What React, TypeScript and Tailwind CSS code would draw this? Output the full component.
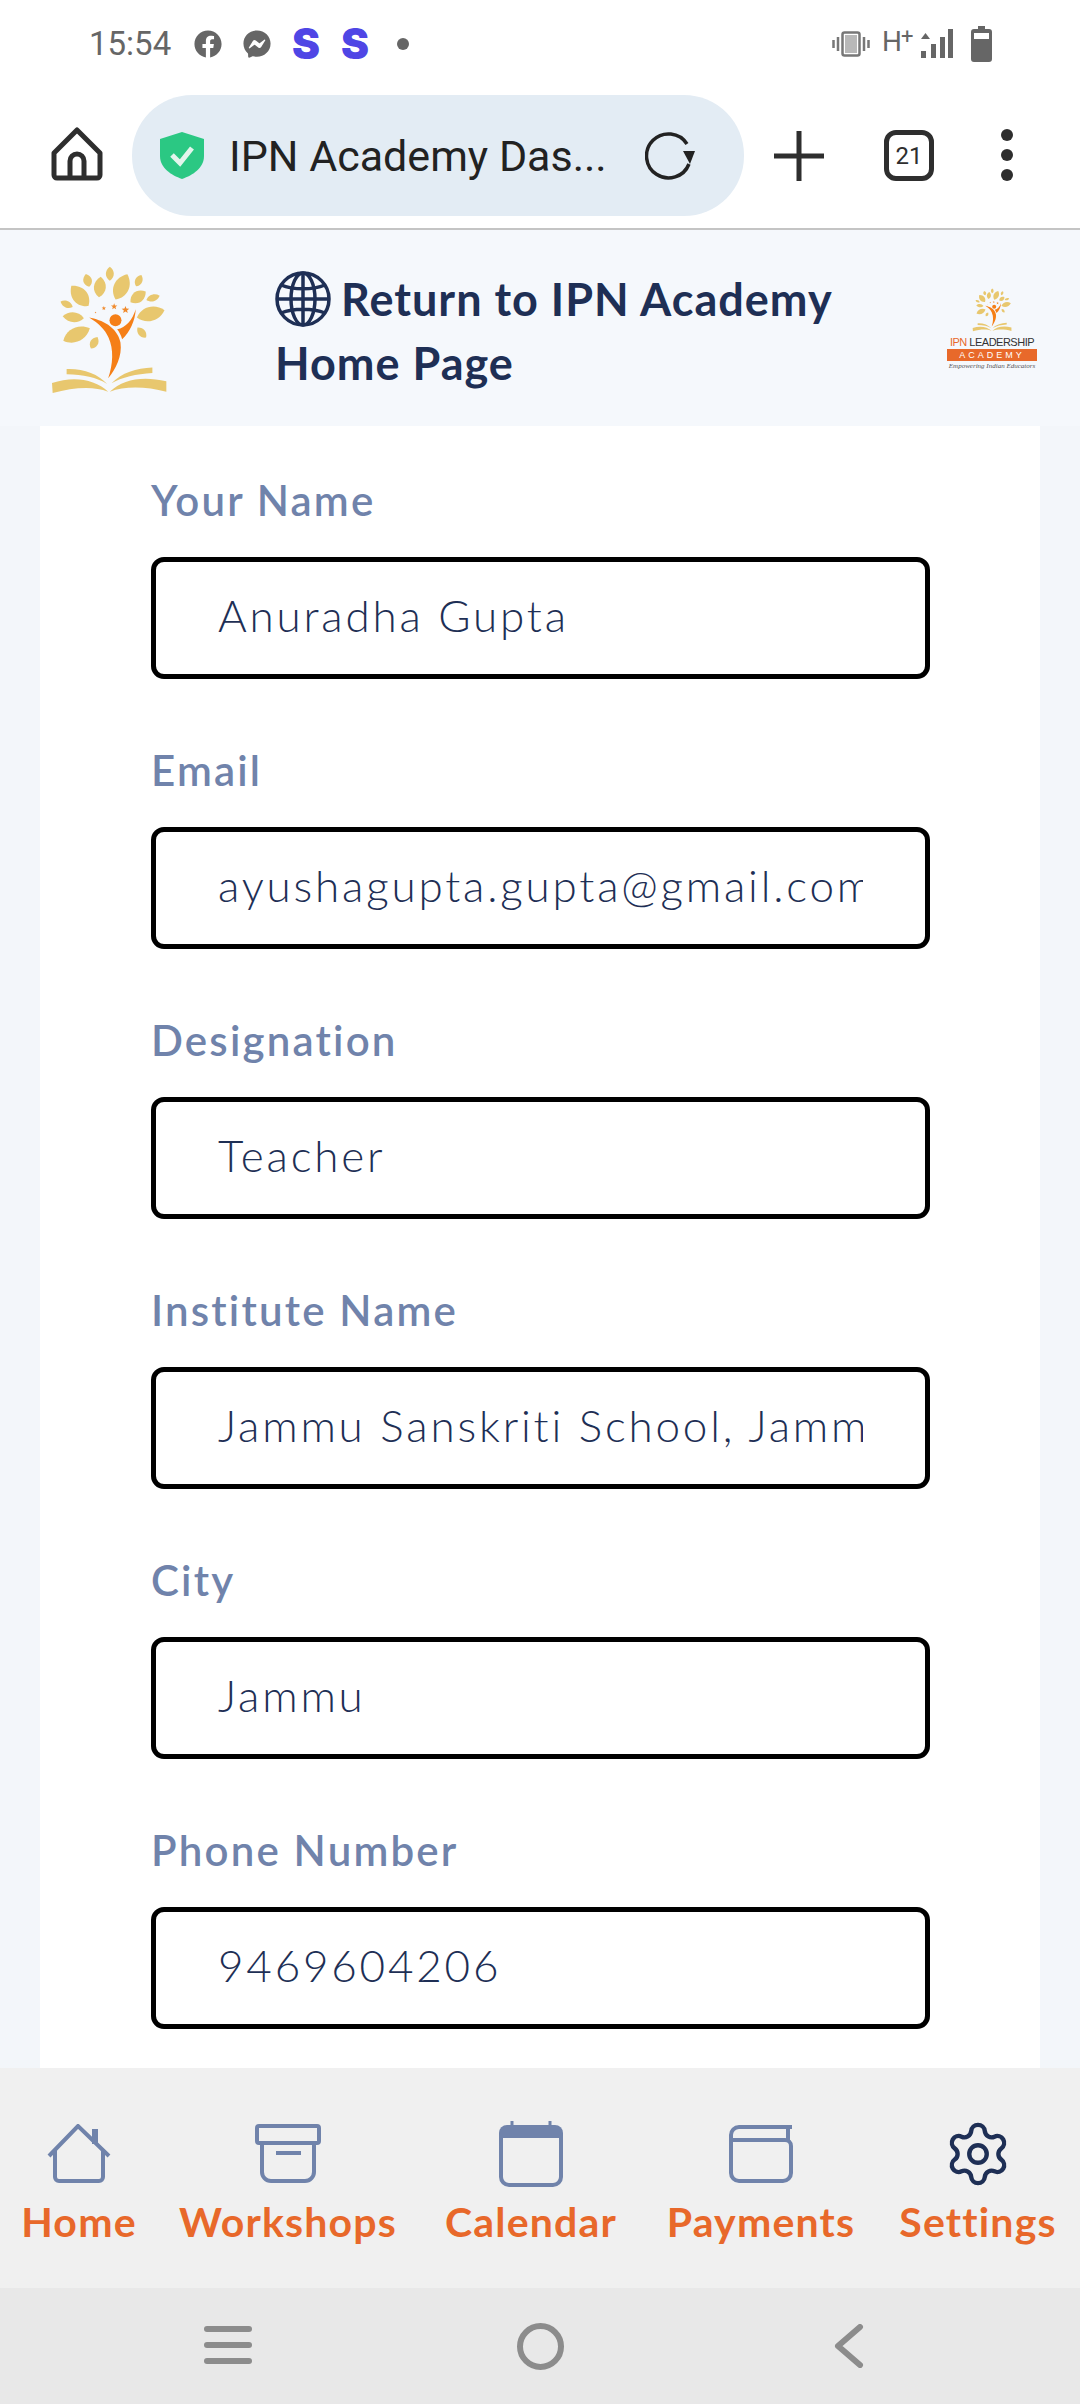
import { Settings } from "lucide-react";
import { FaFacebook, FaFacebookMessenger } from "react-icons/fa";

const fields = [
  { label: "Your Name", value: "Anuradha Gupta" },
  { label: "Email", value: "ayushagupta.gupta@gmail.com" },
  { label: "Designation", value: "Teacher" },
  { label: "Institute Name", value: "Jammu Sanskriti School, Jammu" },
  { label: "City", value: "Jammu" },
  { label: "Phone Number", value: "9469604206" },
];

const leaves = [
  [240, 73, 12, 21, 0],
  [173, 93, 13, 20, -15],
  [210, 113, 18, 31, 5],
  [275, 113, 23, 42, 25],
  [327, 94, 11, 19, 25],
  [150, 140, 23, 40, -40],
  [325, 143, 17, 28, 55],
  [370, 146, 10, 21, 72],
  [110, 165, 10, 20, -65],
  [130, 204, 15, 32, -85],
  [363, 194, 21, 43, 75],
  [140, 256, 21, 44, 65],
  [193, 281, 12, 20, 30],
  [336, 250, 11, 20, -40],
];

const stars = [
  [253, 172, 10],
  [287, 182, 12],
  [222, 177, 7],
  [197, 190, 3],
];

function starPoints(cx: number, cy: number, r: number) {
  const pts: string[] = [];
  for (let i = 0; i < 10; i++) {
    const rad = i % 2 === 0 ? r : r * 0.42;
    const a = (Math.PI / 5) * i - Math.PI / 2;
    pts.push(`${cx + rad * Math.cos(a)},${cy + rad * Math.sin(a)}`);
  }
  return pts.join(" ");
}

function TreeLogo({ className }: { className: string }) {
  return (
    <svg viewBox="60 50 355 385" className={className}>
      {leaves.map(([x, y, rx, ry, rot], i) => (
        <path
          key={i}
          d="M0 -1 C 1.33 -0.45 1.33 0.5 0 1 C -1.33 0.5 -1.33 -0.45 0 -1 Z"
          fill="#e8c76e"
          transform={`translate(${x} ${y}) rotate(${rot}) scale(${rx} ${ry})`}
        />
      ))}
      {stars.map(([x, y, r], i) => (
        <polygon key={i} points={starPoints(x, y, r)} fill="#f08a2c" />
      ))}
      <circle cx="257" cy="213" r="18" fill="#f57f17" />
      <path d="M178 205 C 215 212 262 232 272 280 C 278 320 258 360 235 388 C 250 345 252 300 236 265 C 225 240 205 222 178 205 Z" fill="#f57f17" />
      <path d="M318 180 C 316 215 300 250 277 270 C 274 258 268 248 262 240 C 288 236 308 212 318 180 Z" fill="#f57f17" />
      <path d="M66 402 C 130 380 195 390 235 428 C 190 410 130 415 68 432 Z" fill="#e8c76e" />
      <path d="M410 397 C 340 380 280 390 240 428 C 285 410 350 412 410 428 Z" fill="#e8c76e" />
      <path d="M110 360 C 160 358 205 375 232 405 C 200 385 160 378 110 376 Z" fill="#e8c76e" />
      <path d="M368 355 C 320 358 275 370 245 403 C 275 385 320 375 368 372 Z" fill="#e8c76e" />
    </svg>
  );
}

function StatusBar() {
  return (
    <div className="h-[90px] flex items-center justify-between pl-[89px] pr-[88px] pb-[2px] text-[#666666]">
      <div className="flex items-center">
        <span className="font-['Roboto',sans-serif] text-[33px] w-[105px]">15:54</span>
        <FaFacebook size={28} />
        <FaFacebookMessenger size={28} className="ml-[21px]" />
        <span className="ml-[21px] w-[27px] text-center font-['Inter',sans-serif] font-black text-[42px] leading-none text-[#4f46e5]">S</span>
        <span className="ml-[22px] w-[27px] text-center font-['Inter',sans-serif] font-black text-[42px] leading-none text-[#4f46e5]">S</span>
        <span className="ml-[29px] w-[12px] h-[12px] rounded-full bg-[#666666]" />
      </div>
      <div className="flex items-center">
        <svg width="38" height="26" viewBox="0 0 38 26" fill="none">
          <rect x="10.5" y="1.5" width="17" height="23" rx="2" stroke="#777" strokeWidth="2.5" />
          <rect x="13" y="4" width="12" height="18" fill="#b8b8b8" />
          <path d="M6 6v14M1.5 9v8M32 6v14M36.5 9v8" stroke="#777" strokeWidth="2.5" />
        </svg>
        <span className="ml-[12px] w-[30px] font-['Roboto',sans-serif] text-[28px] leading-none tracking-[-1px] -mt-[4px]">H<sup className="text-[22px] align-baseline relative -top-[7px]">+</sup></span>
        <svg width="33" height="30" viewBox="0 0 33 30" className="ml-[8px]" fill="#666">
          <path d="M1 10 L5.5 4 L10 10 Z" />
          <rect x="1" y="22" width="5" height="7" />
          <rect x="11" y="15" width="5" height="14" />
          <rect x="20" y="8" width="5" height="21" />
          <rect x="28" y="0" width="5" height="29" />
        </svg>
        <svg width="21" height="36" viewBox="0 0 21 36" className="ml-[18px]">
          <path d="M7 0h7v3h4a3 3 0 0 1 3 3v27a3 3 0 0 1-3 3H3a3 3 0 0 1-3-3V6a3 3 0 0 1 3-3h4Z" fill="#666" />
          <rect x="3" y="7" width="15" height="6" fill="#fff" />
        </svg>
      </div>
    </div>
  );
}

function BrowserBar() {
  return (
    <div className="h-[140px] flex items-start border-b-2 border-[#c4c4c4]">
      <svg width="52" height="54" viewBox="0 0 52 54" fill="none" className="ml-[51px] mt-[37px]">
        <path d="M26 3 L49 26 V48 a3 3 0 0 1-3 3 H6 a3 3 0 0 1-3-3 V26 Z" stroke="#2e2e2e" strokeWidth="5" strokeLinejoin="round" />
        <path d="M19 49 V34 a7 7 0 0 1 14 0 V49" stroke="#2e2e2e" strokeWidth="5" />
      </svg>
      <div className="ml-[29px] mt-[5px] w-[612px] h-[121px] rounded-[60px] bg-[#e3ecf4] flex items-center pl-[28px]">
        <svg width="44" height="47" viewBox="0 0 44 47" className="shrink-0">
          <path d="M22 0 L44 7 V24 C44 36 33 43 22 47 C11 43 0 36 0 24 V7 Z" fill="#2bc883" />
          <path d="M12 23 L20 31 L32 16" stroke="#e3f5ec" strokeWidth="5" fill="none" />
        </svg>
        <span className="ml-[25px] mt-[2px] w-[386px] whitespace-nowrap font-['Roboto',sans-serif] text-[43px] text-[#222222]">IPN Academy Das...</span>
        <svg width="52" height="48" viewBox="0 0 52 48" fill="none" className="ml-[30px] shrink-0">
          <path d="M42 12 A22 22 0 1 0 44 32" stroke="#222" strokeWidth="3.5" />
          <path d="M38 18 L50 18 L45 31 Z" fill="#222" transform="translate(0 1)" />
        </svg>
      </div>
      <svg width="50" height="50" viewBox="0 0 50 50" className="ml-[30px] mt-[41px]">
        <path d="M25 0v50M0 25h50" stroke="#2e2e2e" strokeWidth="5" />
      </svg>
      <div className="ml-[60px] mt-[40px] w-[50px] h-[51px] border-[5px] border-[#2e2e2e] rounded-[12px] flex items-center justify-center font-['Roboto',sans-serif] text-[24px] text-[#2e2e2e]">21</div>
      <div className="ml-[67px] mt-[39px] flex flex-col gap-[8px]">
        <div className="w-[12px] h-[12px] rounded-full bg-[#2e2e2e]" />
        <div className="w-[12px] h-[12px] rounded-full bg-[#2e2e2e]" />
        <div className="w-[12px] h-[12px] rounded-full bg-[#2e2e2e]" />
      </div>
    </div>
  );
}

function Header() {
  return (
    <div className="h-[196px] bg-[#f5f8fc] flex items-start relative">
      <TreeLogo className="ml-[50px] mt-[36px] w-[118px] h-[128px] shrink-0" />
      <div className="ml-[107px] mt-[37px] w-[600px] font-['Lato',sans-serif] font-bold text-[45px] tracking-[1px] leading-[64px] text-[#1e2f55]">
        <div className="flex items-center">
          <svg width="56" height="56" viewBox="0 0 56 56" fill="none" stroke="#1e2f55" strokeWidth="3.5" className="mr-[10px] shrink-0">
            <circle cx="28" cy="28" r="26" />
            <ellipse cx="28" cy="28" rx="12" ry="26" />
            <path d="M28 2v52M2 28h52M6 14c12 5 32 5 44 0M6 42c12-5 32-5 44 0" />
          </svg>
          <span className="whitespace-nowrap">Return to IPN Academy</span>
        </div>
        <div>Home Page</div>
      </div>
      <div className="absolute left-[947px] top-[56px] w-[90px] flex flex-col items-center">
        <TreeLogo className="w-[40px] h-[48px]" />
        <div className="mt-[2px] w-full text-center whitespace-nowrap font-['Liberation_Sans',sans-serif] text-[11px] leading-[12px] tracking-[-0.5px] text-[#333333]">
          <span className="text-[#e8692a]">IPN</span> LEADERSHIP
        </div>
        <div className="mt-[1px] w-full h-[12px] bg-[#e8692a] text-center text-white font-['Liberation_Sans',sans-serif] text-[9px] leading-[12px] tracking-[3px]">ACADEMY</div>
        <div className="mt-[1px] whitespace-nowrap font-['Liberation_Serif',serif] italic text-[7px] leading-[9px] text-[#555555]">Empowering Indian Educators</div>
      </div>
    </div>
  );
}

function Field({ label, value }: { label: string; value: string }) {
  return (
    <div className="mb-[69px]">
      <label className="block h-[48px] mb-[31px] font-['Lato',sans-serif] font-semibold text-[42px] leading-[44px] tracking-[2.2px] text-[#7083ab]">{label}</label>
      <input
        readOnly
        value={value}
        className="block w-full h-[122px] bg-white border-[5px] border-black rounded-[13px] pl-[62px] pr-[62px] pb-[7px] font-['Lato',sans-serif] font-light text-[44px] tracking-[2.8px] text-[#1e2f55] outline-none"
      />
    </div>
  );
}

const navColor = "#7083ab";

function HomeIcon() {
  return (
    <svg width="64" height="60" viewBox="0 0 64 60" fill="none" stroke={navColor} strokeWidth="4">
      <path d="M2 32 L31 2 L62 32" />
      <path d="M8 26 V53 a4 4 0 0 0 4 4 H52 a4 4 0 0 0 4-4 V26" />
      <path d="M48 5 V20" strokeWidth="6" />
    </svg>
  );
}

function BoxIcon() {
  return (
    <svg width="66" height="60" viewBox="0 0 66 60" fill="none" stroke={navColor} strokeWidth="4">
      <rect x="2" y="2" width="62" height="17" rx="2" />
      <path d="M7 19 V48 a9 9 0 0 0 9 9 H50 a9 9 0 0 0 9-9 V19" />
      <path d="M21 29 H46" strokeWidth="4" />
    </svg>
  );
}

function CalendarIcon() {
  return (
    <svg width="66" height="66" viewBox="0 0 66 66" fill="none">
      <path d="M14 0v6M52 0v6" stroke={navColor} strokeWidth="3" />
      <path d="M9 4 H57 a8 8 0 0 1 8 8 V17 H1 V12 a8 8 0 0 1 8-8 Z" fill={navColor} />
      <path d="M3 15 V56 a8 8 0 0 0 8 8 H55 a8 8 0 0 0 8-8 V15" stroke={navColor} strokeWidth="4" />
    </svg>
  );
}

function WalletIcon() {
  return (
    <svg width="66" height="60" viewBox="0 0 66 60" fill="none" stroke={navColor} strokeWidth="4">
      <path d="M64 3 H11 a8 8 0 0 0-8 8 V49 a8 8 0 0 0 8 8 H55 a8 8 0 0 0 8-8 V22 a6 6 0 0 0-6-6 H3" />
      <path d="M60 3 V16" />
    </svg>
  );
}

const navItems = [
  { label: "Home", width: "w-[158px]", icon: <HomeIcon /> },
  { label: "Workshops", width: "w-[260px]", icon: <BoxIcon /> },
  { label: "Calendar", width: "w-[226px]", icon: <CalendarIcon /> },
  { label: "Payments", width: "w-[234px]", icon: <WalletIcon /> },
  { label: "Settings", width: "w-[200px]", icon: <Settings size={70} strokeWidth={1.5} color="#1e2f55" /> },
];

function BottomNav() {
  return (
    <div className="h-[220px] bg-[#f0f0f0] flex items-start">
      {navItems.map((item) => (
        <div key={item.label} className={`${item.width} flex flex-col items-center`}>
          <div className="h-[70px] mt-[51px] flex items-center justify-center">{item.icon}</div>
          <span className="mt-[9px] whitespace-nowrap font-['Lato',sans-serif] font-bold text-[41px] tracking-[1.2px] leading-[48px] text-[#e8682a]">{item.label}</span>
        </div>
      ))}
    </div>
  );
}

function SystemNav() {
  return (
    <div className="h-[116px] bg-[#e8e8e8] flex items-start">
      <div className="ml-[204px] mt-[38px] w-[48px] flex flex-col gap-[10px]">
        <div className="h-[6px] rounded-full bg-[#8c8c8c]" />
        <div className="h-[6px] rounded-full bg-[#8c8c8c]" />
        <div className="h-[6px] rounded-full bg-[#8c8c8c]" />
      </div>
      <div className="ml-[265px] mt-[35px] w-[47px] h-[47px] rounded-full border-[6px] border-[#8c8c8c]" />
      <svg width="32" height="44" viewBox="0 0 32 44" fill="none" className="ml-[269px] mt-[36px]">
        <path d="M27 3 L5 22 L27 41" stroke="#8c8c8c" strokeWidth="6" strokeLinecap="round" strokeLinejoin="round" />
      </svg>
    </div>
  );
}

export default function App() {
  return (
    <div className="w-[1080px] h-[2404px] bg-white flex flex-col overflow-hidden">
      <StatusBar />
      <BrowserBar />
      <Header />
      <div className="flex-1 min-h-0 overflow-hidden bg-[#f3f6fa] px-[40px]">
        <div className="bg-white h-full pt-[52px] pl-[111px] pr-[110px]">
          {fields.map((f) => (
            <Field key={f.label} label={f.label} value={f.value} />
          ))}
        </div>
      </div>
      <BottomNav />
      <SystemNav />
    </div>
  );
}
